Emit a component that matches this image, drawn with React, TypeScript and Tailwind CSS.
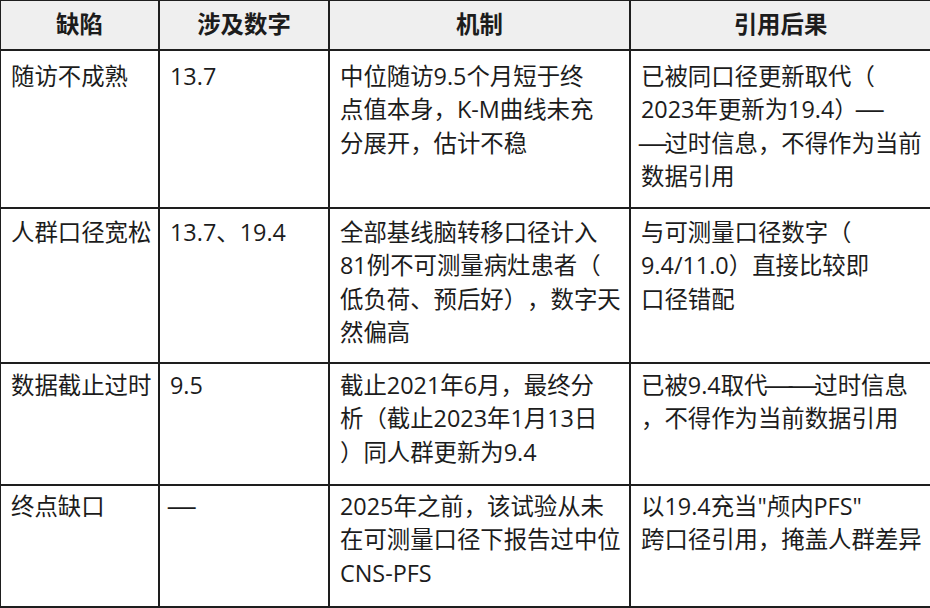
import React from "react";

const rows: { c1: string[]; c2: string[]; c3: string[]; c4: string[]; h: string; pt: string }[] = [
  {
    c1: ["随访不成熟"],
    c2: ["13.7"],
    c3: ["中位随访9.5个月短于终", "点值本身，K-M曲线未充", "分展开，估计不稳"],
    c4: ["已被同口径更新取代（", "2023年更新为19.4）—", "—过时信息，不得作为当前", "数据引用"],
    h: "h-[156px]",
    pt: "pt-[9px]",
  },
  {
    c1: ["人群口径宽松"],
    c2: ["13.7、19.4"],
    c3: ["全部基线脑转移口径计入", "81例不可测量病灶患者（", "低负荷、预后好），数字天", "然偏高"],
    c4: ["与可测量口径数字（", "9.4/11.0）直接比较即", "口径错配"],
    h: "h-[153px]",
    pt: "pt-[7px]",
  },
  {
    c1: ["数据截止过时"],
    c2: ["9.5"],
    c3: ["截止2021年6月，最终分", "析（截止2023年1月13日", "）同人群更新为9.4"],
    c4: ["已被9.4取代——过时信息", "，不得作为当前数据引用"],
    h: "h-[120px]",
    pt: "pt-[5px]",
  },
  {
    c1: ["终点缺口"],
    c2: ["—"],
    c3: ["2025年之前，该试验从未", "在可测量口径下报告过中位", "CNS-PFS"],
    c4: ["以19.4充当\"颅内PFS\"", "跨口径引用，掩盖人群差异"],
    h: "h-[120px]",
    pt: "pt-[4px]",
  },
];

function Line({ text }: { text: string }) {
  const parts = text.split(/(—)/);
  return (
    <div className="whitespace-nowrap">
      {parts.map((p, i) =>
        p === "—" ? (
          <span key={i} className="inline-block w-[1em] text-center">
            <span className="inline-block scale-x-[1.3]">—</span>
          </span>
        ) : (
          <React.Fragment key={i}>{p}</React.Fragment>
        )
      )}
    </div>
  );
}

export default function App() {
  return (
    <div
      className="w-[930px] h-[608px] overflow-hidden bg-white text-[#1c1c1c] [text-spacing-trim:space-all]"
      style={{ fontFamily: '"Open Sans", "Noto Sans CJK SC", sans-serif' }}
    >
      <div className="w-[931px] bg-[#1e1e1e] pt-px pl-px pb-[2px] pr-px">
        <div className="grid grid-cols-[157px_168px_299px_299px] gap-[2px] text-[23.4px] leading-[33.3px]">
          {["缺陷", "涉及数字", "机制", "引用后果"].map((t) => (
            <div key={t} className="h-[48px] bg-[#efefef] flex items-center justify-center font-bold">
              {t}
            </div>
          ))}
          {rows.map((r, i) => (
            <React.Fragment key={i}>
              {[r.c1, r.c2, r.c3, r.c4].map((c, j) => (
                <div key={j} className={`bg-white px-[10px] ${r.h} ${r.pt}`}>
                  {c.map((l, k) => (
                    <Line key={k} text={l} />
                  ))}
                </div>
              ))}
            </React.Fragment>
          ))}
        </div>
      </div>
    </div>
  );
}
